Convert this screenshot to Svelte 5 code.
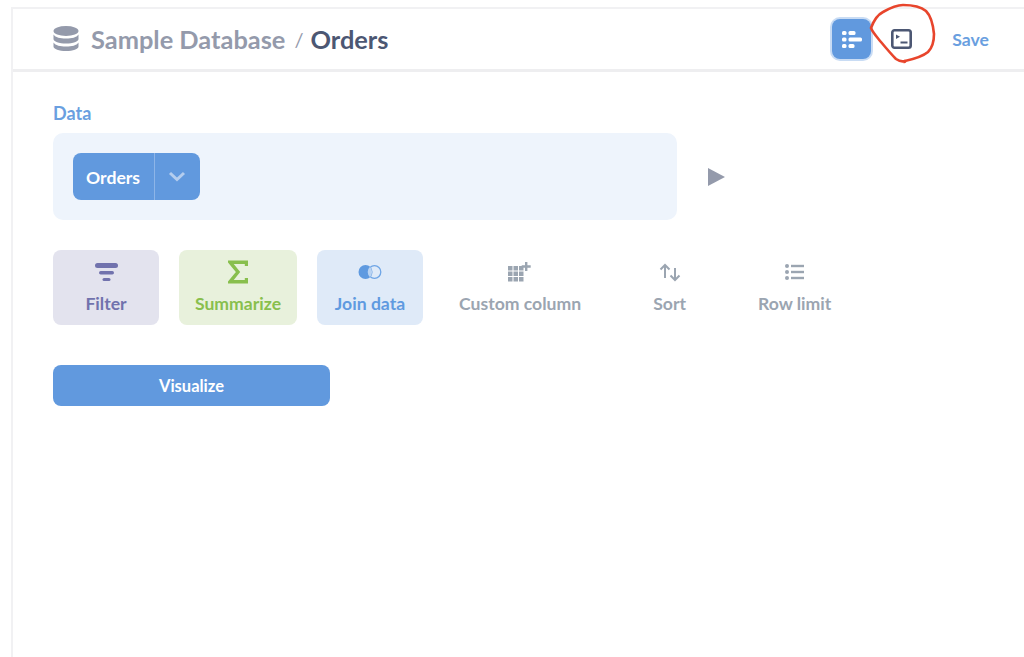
<script>
	const actions = [
		{ label: 'Filter', cls: 'filter', icon: 'filter' },
		{ label: 'Summarize', cls: 'summarize', icon: 'sigma' },
		{ label: 'Join data', cls: 'join', icon: 'join' },
		{ label: 'Custom column', cls: 'plain', icon: 'grid' },
		{ label: 'Sort', cls: 'plain', icon: 'sort' },
		{ label: 'Row limit', cls: 'plain', icon: 'list' }
	];
	const gridCells = [0, 1, 2].flatMap((r) => [0, 1, 2].map((c) => [c * 5.5, 4 + r * 5.5]));
</script>

<div class="page">
	<div class="shell">
		<header class="bar">
			<div class="crumbs">
				<svg class="db" width="26" height="26" viewBox="0 0 26 26" aria-hidden="true">
					<ellipse cx="13" cy="5" rx="12.500" ry="5" />
					<path d="M.5 8.500C2.500 11.500 7 12.500 13 12.500s10.500-1 12.500-4v4.500c0 2.500-5.500 4.500-12.500 4.500S.5 15.500.5 13z" />
					<path d="M.5 16.500c2 3 6.500 4 12.500 4s10.500-1 12.500-4v4c0 2.500-5.500 4.500-12.500 4.500S.5 23 .5 20.500z" />
				</svg>
				<span class="db-name">Sample Database</span>
				<span class="slash">/</span>
				<span class="table">Orders</span>
			</div>
			<div class="tools">
				<button class="tool active" aria-label="Notebook">
					<svg width="20" height="17" viewBox="0 0 20 17" fill="#fff" aria-hidden="true">
						<rect x="0" y="0" width="4.500" height="4" rx="1.500" />
						<rect x="6.500" y="0" width="7" height="4" rx="1.500" />
						<rect x="0" y="6.500" width="4.500" height="4" rx="1.500" />
						<rect x="6.500" y="6.500" width="13.500" height="4" rx="1.500" />
						<rect x="0" y="13" width="4.500" height="4" rx="1.500" />
						<rect x="6.500" y="13" width="6" height="4" rx="1.500" />
					</svg>
				</button>
				<button class="tool sql" aria-label="SQL">
					<svg width="21" height="20" viewBox="0 0 21 20" aria-hidden="true">
						<rect x="1.300" y="1.300" width="18.400" height="17.400" rx="2.200" fill="none" stroke="#4c5773" stroke-width="2.600" />
						<path d="M5 5.500l4 2.300-4 2.300z" fill="#4c5773" />
						<rect x="9.500" y="12.500" width="7" height="2" fill="#4c5773" />
					</svg>
				</button>
				<span class="save">Save</span>
			</div>
		</header>

		<main class="body">
			<div class="section-label">Data</div>
			<div class="data-row">
				<div class="data-box">
					<div class="pill">
						<span class="pill-name">Orders</span>
						<span class="pill-caret">
							<svg width="18" height="11" viewBox="0 0 18 11" aria-hidden="true">
								<path d="M2 2l7 6.500L16 2" fill="none" stroke="#b4cdee" stroke-width="3" />
							</svg>
						</span>
					</div>
				</div>
				<svg class="play" width="17" height="18" viewBox="0 0 17 18" aria-hidden="true">
					<path d="M0 0l17 9L0 18z" fill="#949aab" />
				</svg>
			</div>

			<div class="actions">
				{#each actions as a}
					<div class="action {a.cls}">
						<span class="icon">
							{#if a.icon === 'filter'}
								<svg width="23" height="19" viewBox="0 0 23 19" fill="#7172ad" aria-hidden="true">
									<rect x="0" y="0" width="23" height="5" rx="2.500" />
									<rect x="4" y="8" width="15" height="3.500" rx="1.700" />
									<rect x="7.500" y="15" width="8" height="3" rx="1.500" />
								</svg>
							{:else if a.icon === 'sigma'}
								<svg width="20" height="24" viewBox="0 0 20 24" aria-hidden="true">
									<path d="M18.500 6V2.200H2L10 12 2 21.800h16.500V18" fill="none" stroke="#88bf4d" stroke-width="3.400" />
								</svg>
							{:else if a.icon === 'join'}
								<svg width="24" height="16" viewBox="0 0 24 16" aria-hidden="true">
									<circle cx="16.500" cy="8" r="6.300" fill="none" stroke="#6ea5e6" stroke-width="1.300" />
									<circle cx="7.500" cy="8" r="7" fill="#5f9ae0" />
									<path d="M12 2.800a7.500 7.500 0 0 1 0 10.400a7 7 0 0 1 0-10.400z" fill="#b9d3f2" />
								</svg>
							{:else if a.icon === 'grid'}
								<svg width="24" height="20" viewBox="0 0 24 20" fill="#9ba5b1" aria-hidden="true">
									{#each gridCells as [x, y]}
										<rect x={x} y={y} width="4.500" height="4.500" />
									{/each}
									<path d="M17 0h2.400v3.300h3.300v2.400h-3.300V9H17V5.700h-3.300V3.300H17z" />
								</svg>
							{:else if a.icon === 'sort'}
								<svg width="22" height="19" viewBox="0 0 22 19" fill="none" stroke="#9ba5b1" stroke-width="2" aria-hidden="true">
									<path d="M6 15V2M1.500 6.500L6 2l4.500 4.500" />
									<path d="M16 5v12M11.500 12.500L16 17l4.500-4.500" />
								</svg>
							{:else}
								<svg width="19" height="16" viewBox="0 0 19 16" fill="#9ba5b1" aria-hidden="true">
									<circle cx="2" cy="2" r="2" />
									<circle cx="2" cy="8" r="2" />
									<circle cx="2" cy="14" r="2" />
									<rect x="6" y="0.800" width="13" height="2.400" />
									<rect x="6" y="6.800" width="13" height="2.400" />
									<rect x="6" y="12.800" width="13" height="2.400" />
								</svg>
							{/if}
						</span>
						<span class="action-label">{a.label}</span>
					</div>
				{/each}
			</div>

			<button class="visualize">Visualize</button>
		</main>
	</div>

	<svg class="scribble" width="1024" height="80" viewBox="0 0 1024 80" aria-hidden="true">
		<path d="M871 28C874 20 877 15 883 12C890 8 896 5 903 5C911 5 920 6 926 11C931 16 933 24 934 34C934 42 932 48 928 52C922 57 914 59 905 61C902 62 899 61 896 59C891 54 886 48 881 42C877 37 873 33 871 28Z" fill="none" stroke="#e8452c" stroke-width="2.600" />
		<path d="M904 60l1 3" fill="none" stroke="#e8452c" stroke-width="2.600" />
	</svg>
</div>

<style>
	:global(body) {
		margin: 0;
		background: #fff;
	}
	.page {
		position: relative;
		width: 1024px;
		height: 657px;
		box-sizing: border-box;
		padding: 7px 0 0 11px;
		overflow: hidden;
		font-family: Lato, "Liberation Sans", sans-serif;
	}
	.shell {
		height: 100%;
		border-top: 2px solid #f1f1f3;
		border-left: 2px solid #f1f1f3;
	}
	.bar {
		display: flex;
		align-items: center;
		justify-content: space-between;
		box-sizing: border-box;
		height: 63px;
		padding: 0 35px 0 40px;
		border-bottom: 3px solid #eeeef0;
	}
	.crumbs {
		display: flex;
		align-items: center;
		font-size: 25.400px;
		font-weight: 700;
	}
	.db {
		fill: #949aab;
		margin-right: 12px;
	}
	.db-name {
		color: #949aab;
	}
	.slash {
		margin: 0 7px 0 9px;
		font-size: 20px;
		font-weight: 400;
		color: #949aab;
	}
	.table {
		color: #4c5773;
	}
	.tools {
		display: flex;
		align-items: center;
	}
	.tool {
		display: flex;
		align-items: center;
		justify-content: center;
		height: 40px;
		padding: 0;
		border: 0;
		border-radius: 8px;
		background: transparent;
	}
	.tool.active {
		width: 39px;
		background: #6199de;
		box-shadow: 0 0 0 2px #c9dcf4;
	}
	.tool.sql {
		width: 42px;
		margin-left: 9px;
	}
	.save {
		margin-left: 30px;
		font-size: 17.600px;
		font-weight: 700;
		color: #6a9fe0;
	}
	.body {
		padding: 31px 0 0 40px;
	}
	.section-label {
		font-size: 18px;
		font-weight: 700;
		line-height: 20px;
		color: #6a9fe0;
	}
	.data-row {
		display: flex;
		align-items: center;
		margin-top: 10px;
	}
	.data-box {
		box-sizing: border-box;
		width: 624px;
		height: 87px;
		padding: 20px;
		border-radius: 10px;
		background: #eef4fc;
	}
	.pill {
		display: inline-flex;
		height: 47px;
		border-radius: 8px;
		background: #6199de;
		color: #fff;
		font-size: 17.600px;
		font-weight: 700;
	}
	.pill-name {
		display: flex;
		align-items: center;
		padding: 1px 13px 0;
		width: 55px;
		border-right: 1px solid #8db5e8;
	}
	.pill-caret {
		display: flex;
		justify-content: center;
		width: 45px;
		padding: 18px 2px 0 0;
		box-sizing: border-box;
	}
	.play {
		margin-left: 31px;
	}
	.actions {
		display: flex;
		align-items: stretch;
		margin-top: 30px;
	}
	.action {
		display: flex;
		flex-direction: column;
		align-items: center;
		box-sizing: border-box;
		height: 75px;
		padding: 10px 0 0;
		border-radius: 8px;
		margin-right: 20px;
		font-size: 17.600px;
		font-weight: 700;
		white-space: nowrap;
	}
	.icon {
		display: flex;
		align-items: center;
		justify-content: center;
		height: 24px;
		margin-bottom: 9px;
	}
	.filter {
		width: 106px;
		background: #e3e3ee;
		color: #7172ad;
	}
	.summarize {
		width: 118px;
		background: #e8f1dc;
		color: #88bf4d;
	}
	.join {
		width: 106px;
		background: #dfeaf8;
		color: #5f9ae0;
	}
	.plain {
		padding-left: 16px;
		padding-right: 16px;
		margin-right: 40px;
		background: transparent;
		color: #9ba5b1;
	}
	.visualize {
		display: block;
		width: 277px;
		height: 41px;
		margin-top: 40px;
		padding: 1px 0 0;
		border: 0;
		border-radius: 8px;
		background: #6199de;
		color: #fff;
		font: 700 16.500px Lato, "Liberation Sans", sans-serif;
	}
	.scribble {
		position: absolute;
		top: 0;
		left: 0;
		pointer-events: none;
	}
</style>
